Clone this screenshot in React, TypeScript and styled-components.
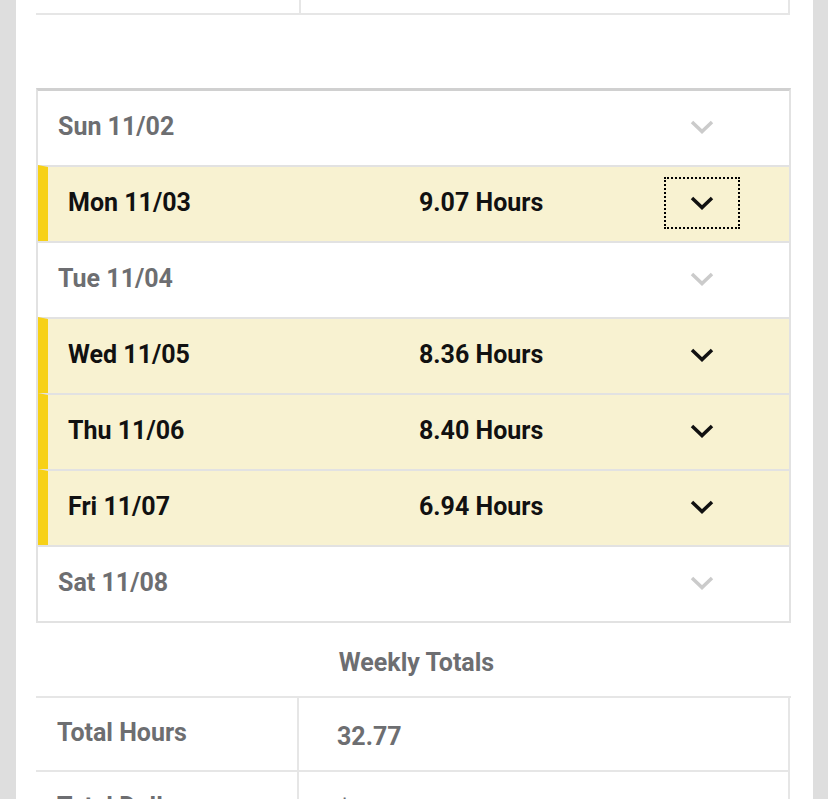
import { createGlobalStyle } from 'styled-components'
import styled from 'styled-components'

interface Day {
	label: string
	hours?: string
	focused?: boolean
}

const days: Day[] = [
	{ label: 'Sun 11/02' },
	{ label: 'Mon 11/03', hours: '9.07 Hours', focused: true },
	{ label: 'Tue 11/04' },
	{ label: 'Wed 11/05', hours: '8.36 Hours' },
	{ label: 'Thu 11/06', hours: '8.40 Hours' },
	{ label: 'Fri 11/07', hours: '6.94 Hours' },
	{ label: 'Sat 11/08' }
]

const Chevron = ({ color }: { color: string }) => (
	<svg width="24" height="14" viewBox="0 0 24 14">
		<path d="M2 2 L12 11.5 L22 2" fill="none" stroke={color} strokeWidth="3.5" />
	</svg>
)

const App = () => {
	return (
		<>
			<GlobalStyle />
			<Page>
				<Card>
					<TopTable>
						<TopCell />
						<TopCell />
					</TopTable>
					<Accordion>
						{days.map(day => (
							<DayRow key={day.label} $active={!!day.hours}>
								<DayLabel $active={!!day.hours}>{day.label}</DayLabel>
								<Hours>{day.hours}</Hours>
								<ToggleButton $focused={day.focused}>
									<Chevron color={day.hours ? '#111' : '#cbcbcb'} />
								</ToggleButton>
							</DayRow>
						))}
					</Accordion>
					<Totals>
						<TotalsTitle>Weekly Totals</TotalsTitle>
						<TotalsRow>
							<TotalsLabel>Total Hours</TotalsLabel>
							<TotalsValue>32.77</TotalsValue>
						</TotalsRow>
						<TotalsRow>
							<TotalsLabel>Total Dollars</TotalsLabel>
							<TotalsValue>$</TotalsValue>
						</TotalsRow>
					</Totals>
				</Card>
			</Page>
		</>
	)
}
export default App

const GlobalStyle = createGlobalStyle`
	html, body {
		margin: 0;
		padding: 0;
		background: #dedede;
		overflow: hidden;
	}
	body {
		font-family: Roboto, "Liberation Sans", sans-serif;
	}
`
const Page = styled.div`
	width: 828px;
	height: 799px;
	overflow: hidden;
	padding: 0 15px 0 16px;
	box-sizing: border-box;
	background: #dedede;
`
const Card = styled.div`
	background: #fff;
	height: 100%;
	padding: 0 22px 0 20px;
	display: flex;
	flex-direction: column;
	& > * {
		flex-shrink: 0;
	}
`
const TopTable = styled.div`
	display: grid;
	grid-template-columns: 263px 1fr;
	height: 13px;
	border-bottom: 2px solid #e6e6e6;
	border-right: 2px solid #e6e6e6;
	margin-right: 1px;
`
const TopCell = styled.div`
	& + & {
		border-left: 2px solid #e6e6e6;
	}
`
const Accordion = styled.div`
	margin-top: 73px;
	border: 2px solid #e2e2e2;
	border-top: 3px solid #d0d0d0;
	display: flex;
	flex-direction: column;
`
const DayRow = styled.div<{ $active: boolean }>`
	display: grid;
	grid-template-columns: 351px 1fr 76px;
	align-items: center;
	height: 74px;
	padding: 0 49px 0 20px;
	background: ${p => (p.$active ? '#f8f2d1' : '#fff')};
	border-left: ${p => (p.$active ? '10px solid #f7d117' : '0')};
	& + & {
		border-top: 2px solid #e2e2e2;
	}
`
const DayLabel = styled.div<{ $active: boolean }>`
	font-size: 25px;
	font-weight: 700;
	color: ${p => (p.$active ? '#111' : '#6d6e71')};
	position: relative;
	top: -2px;
`
const Hours = styled.div`
	font-size: 25px;
	font-weight: 700;
	color: #111;
	position: relative;
	top: -2px;
`
const ToggleButton = styled.div<{ $focused?: boolean }>`
	height: 52px;
	display: flex;
	align-items: center;
	justify-content: center;
	box-sizing: border-box;
	border: 2px dotted ${p => (p.$focused ? '#000' : 'transparent')};
	margin-top: -2px;
`
const Totals = styled.div`
	display: flex;
	flex-direction: column;
`
const TotalsTitle = styled.div`
	height: 75px;
	display: flex;
	align-items: center;
	justify-content: center;
	padding-left: 6px;
	padding-top: 6px;
	box-sizing: border-box;
	border-bottom: 2px solid #e6e6e6;
	font-size: 25px;
	font-weight: 700;
	color: #6d6e71;
`
const TotalsRow = styled.div`
	display: grid;
	grid-template-columns: 263px 1fr;
	height: 72px;
	border-bottom: 2px solid #e6e6e6;
	border-right: 2px solid #e6e6e6;
	margin-right: 1px;
`
const TotalsLabel = styled.div`
	display: flex;
	align-items: center;
	padding-left: 21px;
	padding-bottom: 4px;
	font-size: 25px;
	font-weight: 700;
	color: #6d6e71;
	border-right: 2px solid #e6e6e6;
`
const TotalsValue = styled.div`
	display: flex;
	align-items: center;
	padding-left: 38px;
	padding-top: 4px;
	font-size: 25px;
	font-weight: 700;
	color: #6d6e71;
`
